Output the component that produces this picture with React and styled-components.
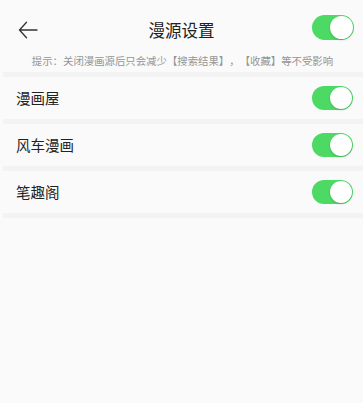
import React, { useState } from "react";
import styled, { createGlobalStyle } from "styled-components";

const Global = createGlobalStyle`
  html, body { margin: 0; padding: 0; background: #fafafa; }
  body { font-family: "Noto Sans CJK SC", "Noto Sans", sans-serif; }
`;

const Page = styled.div`
  width: 363px;
  height: 403px;
  background: #fafafa;
  display: flex;
  flex-direction: column;
  overflow: hidden;
`;

const Header = styled.div`
  height: 50px;
  display: flex;
  align-items: center;
  justify-content: space-between;
  padding: 0 9px 0 18px;
  position: relative;
`;

const BackButton = styled.button`
  width: 20px;
  height: 24px;
  padding: 0;
  border: none;
  background: transparent;
  display: flex;
  align-items: center;
  justify-content: center;
  margin-top: 9px;
`;

const Title = styled.div`
  position: absolute;
  left: 0;
  right: 0;
  top: 19px;
  text-align: center;
  font-size: 16.5px;
  line-height: 22px;
  color: #222;
  pointer-events: none;
`;

const HeaderSwitchWrap = styled.div`
  margin-top: 5px;
  display: flex;
`;

const Hint = styled.div`
  height: 22px;
  font-size: 10.4px;
  line-height: 22px;
  color: #959595;
  text-align: center;
  text-spacing-trim: space-all;
  padding-left: 2px;
`;

const List = styled.div`
  display: flex;
  flex-direction: column;
`;

const Separator = styled.div`
  height: 5px;
  margin-left: 3px;
  background: #f3f3f3;
`;

const Row = styled.div`
  height: 42px;
  display: flex;
  align-items: center;
  justify-content: space-between;
  padding: 0 10px 0 16px;
`;

const Label = styled.div`
  font-size: 14.5px;
  color: #222;
  line-height: 20px;
  margin-top: -1px;
`;

const Track = styled.button`
  width: ${(p) => p.$w}px;
  height: ${(p) => p.$h}px;
  border-radius: ${(p) => p.$h / 2}px;
  border: none;
  padding: 0;
  background: ${(p) => (p.$on ? "#4cd964" : "#e0e0e0")};
  position: relative;
  cursor: pointer;
`;

const Knob = styled.span`
  position: absolute;
  top: 1px;
  left: ${(p) => (p.$on ? p.$w - p.$h + 1 : 1)}px;
  width: ${(p) => p.$h - 2}px;
  height: ${(p) => p.$h - 2}px;
  border-radius: 50%;
  background: #fff;
  box-shadow: 0 1px 2px rgba(0, 0, 0, 0.18);
`;

function Switch({ on, onToggle, w = 41, h = 24 }) {
  return (
    <Track $on={on} $w={w} $h={h} onClick={onToggle}>
      <Knob $on={on} $w={w} $h={h} />
    </Track>
  );
}

export default function App() {
  const [all, setAll] = useState(true);
  const [items, setItems] = useState([
    { name: "漫画屋", on: true },
    { name: "风车漫画", on: true },
    { name: "笔趣阁", on: true },
  ]);
  const toggle = (i) =>
    setItems((s) => s.map((it, j) => (j === i ? { ...it, on: !it.on } : it)));

  return (
    <Page>
      <Global />
      <Header>
        <BackButton aria-label="back">
          <svg width="20" height="18" viewBox="0 0 20 18" fill="none">
            <path
              d="M19 9H1.8M8.5 1.2L1.5 9L8.5 16.8"
              stroke="#333"
              strokeWidth="1.3"
              strokeLinecap="round"
              strokeLinejoin="round"
            />
          </svg>
        </BackButton>
        <Title>漫源设置</Title>
        <HeaderSwitchWrap>
          <Switch on={all} onToggle={() => setAll(!all)} w={42} h={25} />
        </HeaderSwitchWrap>
      </Header>
      <Hint>提示：关闭漫画源后只会减少【搜索结果】，【收藏】等不受影响</Hint>
      <List>
        <Separator />
        {items.map((it, i) => (
          <React.Fragment key={it.name}>
            <Row>
              <Label>{it.name}</Label>
              <Switch on={it.on} onToggle={() => toggle(i)} />
            </Row>
            <Separator />
          </React.Fragment>
        ))}
      </List>
    </Page>
  );
}
